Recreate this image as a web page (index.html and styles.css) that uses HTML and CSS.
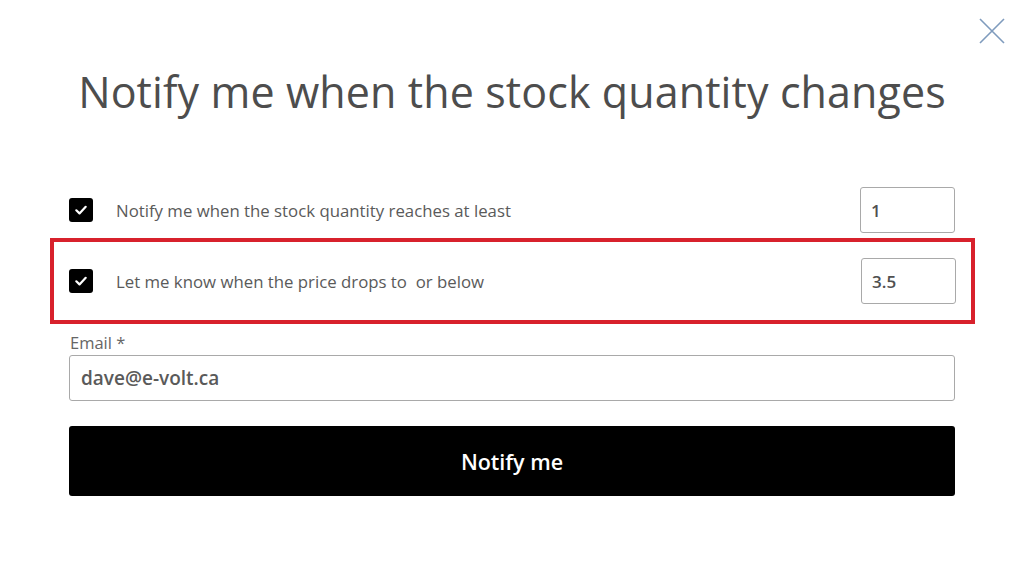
FILE: index.html
```html
<!DOCTYPE html>
<html lang="en">
<head>
<meta charset="utf-8">
<title>Notify me</title>
<link rel="stylesheet" href="styles.css">
</head>
<body>
<div class="modal">
  <button class="close" aria-label="Close">
    <svg width="28" height="28" viewBox="0 0 28 28"><path d="M2 2 L26 26 M26 2 L2 26" stroke="#7f9bbd" stroke-width="1.6" fill="none"/></svg>
  </button>
  <h1 class="title">Notify me when the stock quantity changes</h1>
  <form class="form">
    <div class="row">
      <span class="check"><svg width="14" height="14" viewBox="0 0 14 14"><path d="M2.3 7.3 L5.5 10.4 L11.7 3.8" stroke="#fff" stroke-width="2.2" fill="none" stroke-linecap="round" stroke-linejoin="round"/></svg></span>
      <span class="label">Notify me when the stock quantity reaches at least</span>
      <span class="num">1</span>
    </div>
    <div class="row highlight">
      <span class="check"><svg width="14" height="14" viewBox="0 0 14 14"><path d="M2.3 7.3 L5.5 10.4 L11.7 3.8" stroke="#fff" stroke-width="2.2" fill="none" stroke-linecap="round" stroke-linejoin="round"/></svg></span>
      <span class="label">Let me know when the price drops to &nbsp;or below</span>
      <span class="num">3.5</span>
    </div>
    <div class="email-label">Email *</div>
    <div class="email">dave@e-volt.ca</div>
    <div class="submit">Notify me</div>
  </form>
</div>
</body>
</html>
```

FILE: styles.css
```css
html, body {
  margin: 0;
  padding: 0;
  background: #fff;
}
body {
  font-family: "Open Sans", "Liberation Sans", sans-serif;
  width: 1024px;
  height: 566px;
  overflow: hidden;
}
.modal {
  position: relative;
  padding-top: 63px;
}
.close {
  position: absolute;
  top: 17px;
  right: 18px;
  padding: 0;
  border: 0;
  background: none;
  width: 28px;
  height: 28px;
}
.close svg { display: block; }
.title {
  margin: 0;
  font-size: 43px;
  font-weight: 400;
  line-height: 58px;
  color: #4d4d4d;
  text-align: center;
  letter-spacing: 0.1px;
}
.form {
  width: 886px;
  margin: 66px 0 0 69px;
  display: flex;
  flex-direction: column;
}
.row {
  display: flex;
  align-items: center;
  height: 46px;
}
.highlight {
  margin: 5px -20px 0 -19px;
  padding: 16px 15px;
  border: 4px solid #d8212c;
}
.check {
  width: 24px;
  height: 24px;
  background: #000;
  border-radius: 3px;
  display: flex;
  align-items: center;
  justify-content: center;
  flex: none;
}
.check svg { display: block; }
.label {
  flex: 1;
  margin-left: 23px;
  font-size: 16.8px;
  color: #5a5a5a;
}
.num {
  width: 95px;
  height: 46px;
  box-sizing: border-box;
  border: 1.5px solid #a9a9a9;
  border-radius: 3px;
  padding-left: 10px;
  display: flex;
  align-items: center;
  font-size: 17px;
  font-weight: 600;
  color: #505050;
}
.email-label {
  margin-top: 7px;
  line-height: 24px;
  font-size: 16.5px;
  color: #666;
  padding-left: 1px;
}
.email {
  height: 46px;
  box-sizing: border-box;
  border: 1.5px solid #a9a9a9;
  border-radius: 3px;
  padding-left: 11px;
  display: flex;
  align-items: center;
  font-size: 19px;
  font-weight: 600;
  color: #5a5a5a;
}
.submit {
  margin-top: 25px;
  height: 70px;
  background: #000;
  border-radius: 3px;
  color: #fff;
  font-size: 21.5px;
  font-weight: 600;
  display: flex;
  align-items: center;
  justify-content: center;
}
```
